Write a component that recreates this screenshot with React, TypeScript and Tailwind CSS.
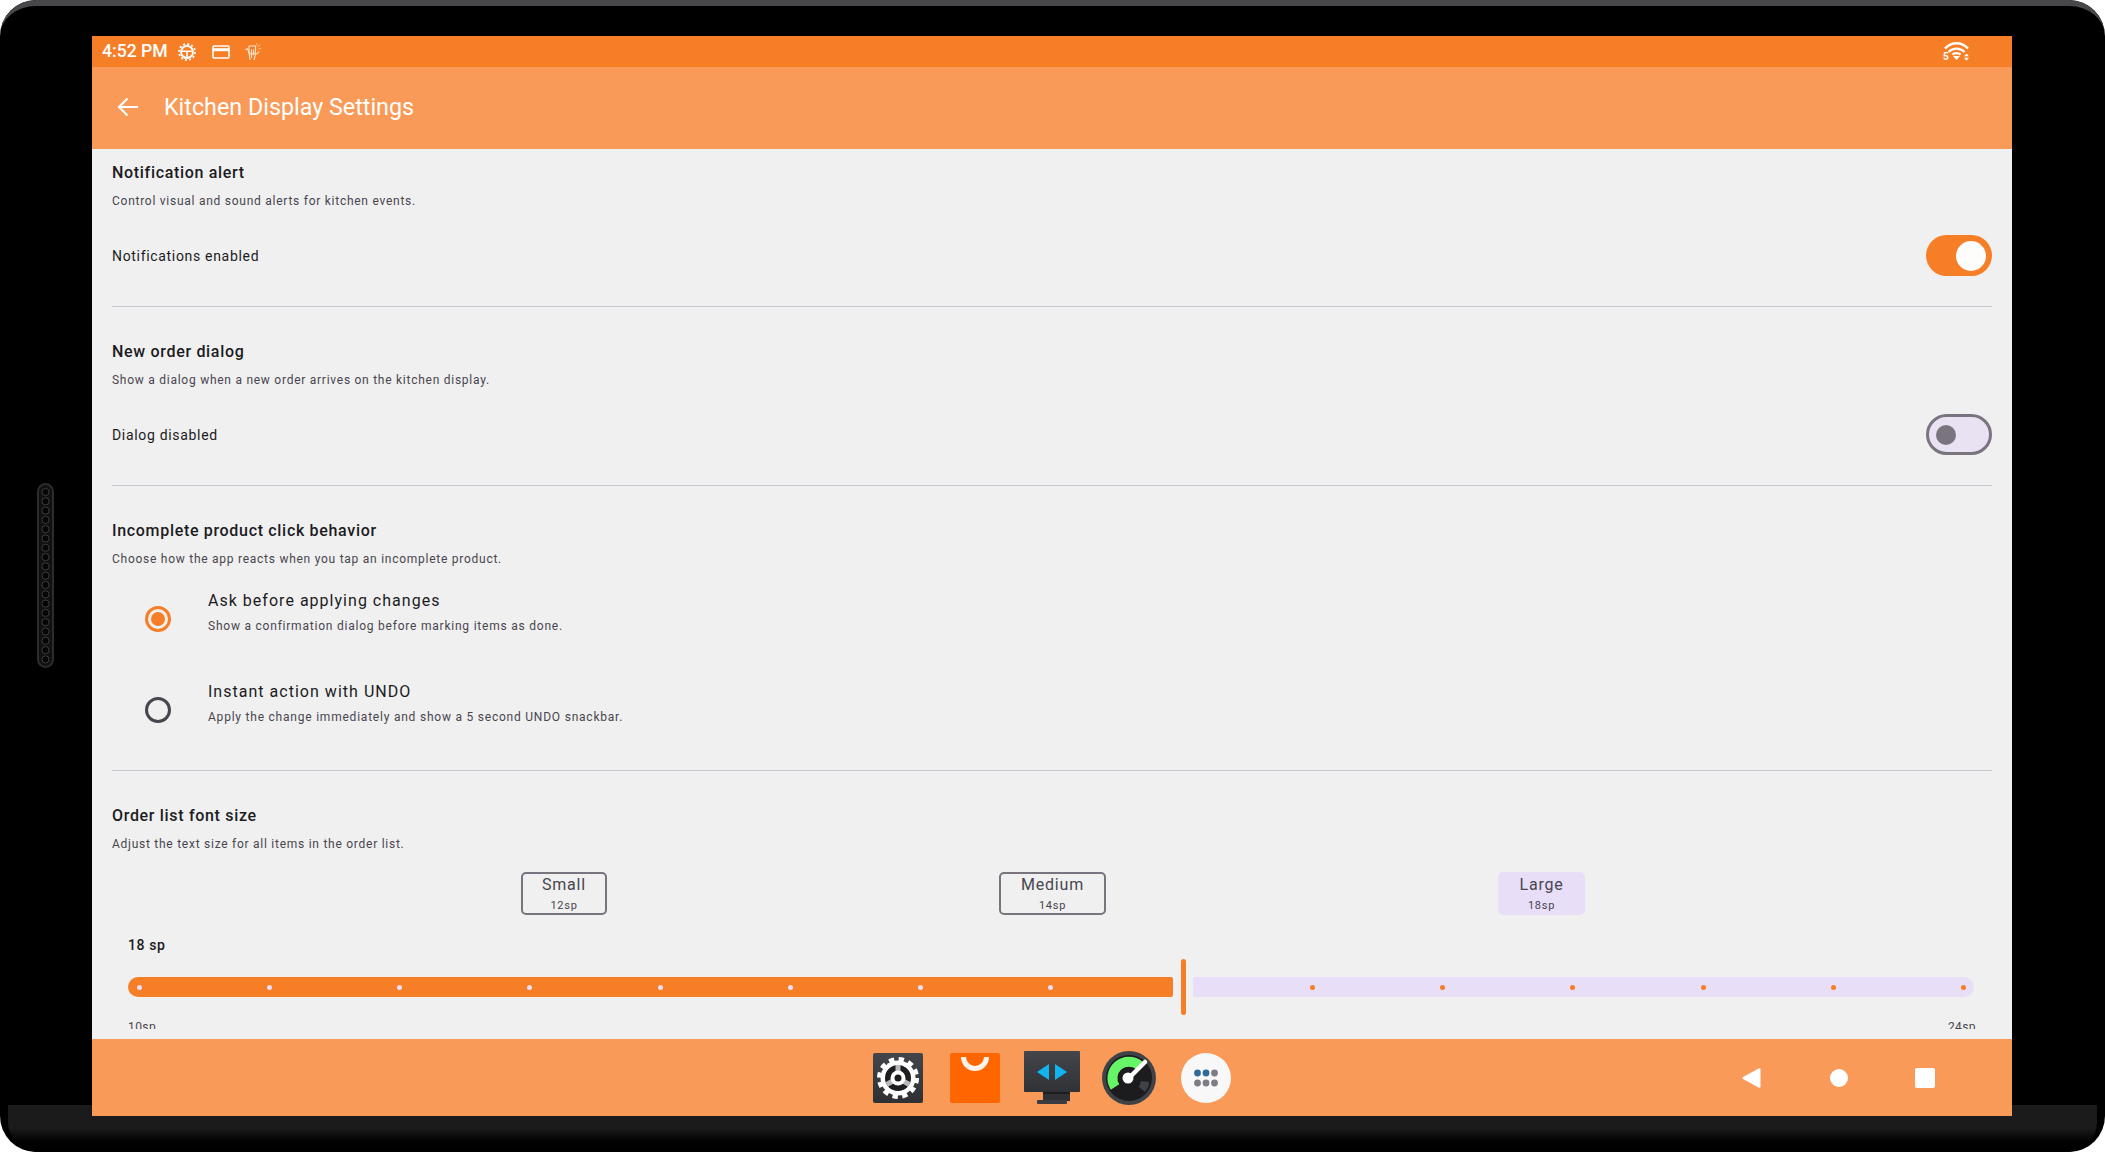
import React from "react";

const Dots = ({ n, color }: { n: number; color: string }) => (
  <>
    {Array.from({ length: n }).map((_, i) => (
      <span key={i} className={`w-[5px] h-[5px] rounded-full ${color}`} />
    ))}
  </>
);

const SectionHead = ({ title, sub }: { title: string; sub: string }) => (
  <>
    <div className="text-[16px] leading-[24px] font-medium tracking-[0.68px] text-[#1c1b1f]">{title}</div>
    <div className="mt-[8px] text-[12px] leading-[16px] tracking-[0.74px] text-[#49454f]">{sub}</div>
  </>
);

const Divider = () => <div className="h-[1px] bg-[#cac4d0]" />;

const ToggleRow = ({ label, on }: { label: string; on: boolean }) => (
  <div className="mt-[26px] flex h-[41px] items-center justify-between">
    <span className="pt-[1px] text-[14px] tracking-[0.68px] text-[#1c1b1f]">{label}</span>
    {on ? (
      <div className="flex h-[41px] w-[66px] items-center justify-end rounded-full bg-[#f67e26] pr-[6px]">
        <div className="h-[30px] w-[30px] rounded-full bg-[#fdfdfd]" />
      </div>
    ) : (
      <div className="flex h-[41px] w-[66px] items-center rounded-full border-[3px] border-[#79747e] bg-[#e8e2f3] pl-[7px]">
        <div className="h-[20px] w-[20px] rounded-full bg-[#79747e]" />
      </div>
    )}
  </div>
);

const RadioRow = ({ title, sub, on }: { title: string; sub: string; on: boolean }) => (
  <div className="flex h-[91px] items-center pl-[33px]">
    {on ? (
      <div className="flex h-[26px] w-[26px] items-center justify-center rounded-full border-[3px] border-[#f67e26]">
        <div className="h-[14px] w-[14px] rounded-full bg-[#f67e26]" />
      </div>
    ) : (
      <div className="h-[26px] w-[26px] rounded-full border-[3px] border-[#49454f]" />
    )}
    <div className="ml-[37px] self-start pt-[16px]">
      <div className="text-[16px] leading-[24px] tracking-[1.02px] text-[#1c1b1f]">{title}</div>
      <div className="mt-[5px] text-[12px] leading-[16px] tracking-[0.78px] text-[#49454f]">{sub}</div>
    </div>
  </div>
);

const Chip = ({ label, sp, w, filled }: { label: string; sp: string; w: string; filled?: boolean }) => (
  <div
    className={`flex h-[43px] flex-col items-center rounded-[5px] ${w} ${
      filled ? "bg-[#e8def8]" : "border-2 border-[#79747e]"
    }`}
  >
    <span className={`text-[16px] leading-[20px] tracking-[0.8px] text-[#49454f] ${filled ? "mt-[3px]" : "mt-[1px]"}`}>{label}</span>
    <span className="mt-[4px] text-[11px] leading-[14px] tracking-[0.7px] text-[#49454f]">{sp}</span>
  </div>
);

const StatusGear = () => (
  <svg width="18" height="18" viewBox="0 0 18 18" fill="none" stroke="#fff">
    <circle cx="9" cy="9" r="8" strokeWidth="1.8" strokeDasharray="2 2.19" />
    <circle cx="9" cy="9" r="6" strokeWidth="1.8" />
    <path d="M3.5 8.2H14.5M9 8.2V14" strokeWidth="1.6" />
  </svg>
);

const StatusCard = () => (
  <svg width="18" height="14" viewBox="0 0 18 14" fill="none">
    <rect x="1" y="1" width="16" height="12" rx="1" stroke="#fff" strokeWidth="1.6" />
    <rect x="1" y="3.2" width="16" height="3" fill="#fff" />
  </svg>
);

const StatusFigure = () => (
  <svg width="18" height="18" viewBox="0 0 18 18" fill="none" stroke="#fde3cc" strokeWidth="1.1">
    <path d="M1 6.5L3.5 6 5 10 6 17M15 8.5C14 10.5 12.5 11 11.5 11L10 17" />
    <path d="M5 3H11.5V9C11.5 10.5 9.5 11 8 11 6.5 11 5 10 5 8.5Z" />
    <path d="M7.5 6.5V15M9.5 6.5V12" />
    <path d="M13.5 3.5L16.5 1.5M14.5 6L17 5.5M12.5 1.5L13 .5" strokeDasharray="1 1" />
  </svg>
);

const StatusWifi = () => (
  <div className="relative h-[20px] w-[27px]">
    <svg width="27" height="20" viewBox="0 0 27 20" fill="none" stroke="#fff" strokeWidth="2.4">
      <path d="M2 6.5C8.5 -0.5 18.5 -0.5 25 6.5" />
      <path d="M5.5 10C10 5.5 17 5.5 21.5 10" />
      <path d="M9.5 12.6C11.5 10.6 15.5 10.6 17.5 12.6" />
      <path d="M10 14H17L13.5 18Z" fill="#fff" stroke="none" />
      <path d="M21 14.2H26L23.5 11.5ZM21 15.8H26L23.5 18.8Z" fill="#fff" stroke="none" />
    </svg>
    <span className="absolute bottom-[-1px] left-0 text-[10px] font-bold leading-[12px] text-white">5</span>
  </div>
);

const SettingsApp = () => (
  <svg width="50" height="50" viewBox="0 0 50 50">
    <defs>
      <linearGradient id="sg" x1="0" y1="0" x2="0" y2="1">
        <stop offset="0" stopColor="#43454b" />
        <stop offset="1" stopColor="#2e3034" />
      </linearGradient>
    </defs>
    <rect width="50" height="50" rx="2" fill="url(#sg)" />
    <circle cx="25" cy="25" r="18.5" fill="none" stroke="#fff" strokeWidth="5" strokeDasharray="5.2 4.5" />
    <circle cx="25" cy="25" r="17.5" fill="#fff" />
    <circle cx="25" cy="25" r="13" fill="#1d1d1f" />
    <path d="M25 12V18M13.7 31.5L19 28.5M36.3 31.5L31 28.5" stroke="#b9b9bd" strokeWidth="5" />
    <circle cx="25" cy="25" r="7.5" fill="#fff" />
    <circle cx="25" cy="25" r="3.5" fill="#1d1d1f" />
  </svg>
);

const BagApp = () => (
  <svg width="50" height="50" viewBox="0 0 50 50">
    <rect width="50" height="50" rx="2" fill="#ff6600" />
    <path d="M13.5 4A11.5 11.5 0 0 0 36.5 4" fill="none" stroke="#fdf3ea" strokeWidth="5" />
  </svg>
);

const MonitorApp = () => (
  <svg width="56" height="53" viewBox="0 0 56 53">
    <defs>
      <linearGradient id="mg" x1="0" y1="0" x2="0" y2="1">
        <stop offset="0" stopColor="#43454b" />
        <stop offset="1" stopColor="#303236" />
      </linearGradient>
    </defs>
    <rect width="56" height="41" rx="1" fill="url(#mg)" />
    <rect x="19" y="41" width="27" height="9" fill="#2f3135" />
    <rect x="19" y="41" width="27" height="2" fill="#1d1d1f" />
    <rect x="13" y="49" width="30" height="4" rx="1" fill="#3a3c41" />
    <path d="M25 13V29L13 21ZM31 13V29L43 21Z" fill="#12b4f0" />
  </svg>
);

const GaugeApp = () => (
  <svg width="54" height="54" viewBox="0 0 54 54">
    <circle cx="27" cy="27" r="27" fill="#3f4247" />
    <circle cx="27" cy="27" r="23" fill="#1c1c1e" />
    <path d="M37 36L43 41C46 37 47 34 47 31L39 30Z" fill="#3f4247" />
    <path d="M13 36A16.5 16.5 0 0 1 37.5 14.5" fill="none" stroke="#66f566" strokeWidth="10" />
    <circle cx="27" cy="27" r="11" fill="#1c1c1e" />
    <path d="M27 27L43 11" stroke="#fff" strokeWidth="4.5" strokeLinecap="round" />
    <circle cx="26" cy="27" r="5.5" fill="#fff" />
  </svg>
);

const AppsApp = () => (
  <svg width="50" height="50" viewBox="0 0 50 50">
    <circle cx="25" cy="25" r="25" fill="#f8f8f8" />
    <circle cx="16.5" cy="20" r="3.4" fill="#2f6a9b" />
    <circle cx="25" cy="20" r="3.4" fill="#2f6a9b" />
    <circle cx="33.5" cy="20" r="3.4" fill="#7e7c85" />
    <circle cx="16.5" cy="30" r="3.4" fill="#7e7c85" />
    <circle cx="25" cy="30" r="3.4" fill="#7e7c85" />
    <circle cx="33.5" cy="30" r="3.4" fill="#7e7c85" />
  </svg>
);

const Grill = () => (
  <svg width="17" height="185" viewBox="0 0 17 185" fill="none">
    <rect x="1" y="1" width="15" height="183" rx="7.5" fill="#111" stroke="#2c2c2e" strokeWidth="2" />
    {Array.from({ length: 19 }).map((_, i) => (
      <circle key={i} cx="8.5" cy={9 + i * 9.3} r="3.6" fill="#050505" stroke="#3c3c3e" strokeWidth="1" />
    ))}
  </svg>
);

export default function App() {
  return (
    <div className="relative h-[1152px] w-[2105px] overflow-hidden bg-white font-['Roboto',sans-serif]">
      <div className="relative h-full w-full overflow-hidden rounded-[36px] bg-black pl-[92px] pt-[36px]">
        {/* device frame details */}
        <div className="absolute inset-0 rounded-[36px] border-t-[6px] border-[#48484b]" />
        <div className="absolute bottom-0 left-[8px] right-[8px] top-[1105px] rounded-b-[30px] bg-gradient-to-b from-[#1b1b1b] via-[#1b1b1b] to-black" />
        <div className="absolute left-[37px] top-[483px]">
          <Grill />
        </div>

        {/* screen */}
        <div className="relative flex h-[1080px] w-[1920px] flex-col bg-[#f0f0f0]">
          <div className="flex h-[31px] shrink-0 items-center bg-[#f67e26] pl-[10px] pr-[42px] text-white">
            <span className="text-[17.6px] font-medium leading-[31px]">4:52 PM</span>
            <span className="ml-[10px]"><StatusGear /></span>
            <span className="ml-[16px]"><StatusCard /></span>
            <span className="ml-[14px]"><StatusFigure /></span>
            <span className="ml-auto"><StatusWifi /></span>
          </div>

          <div className="flex h-[82px] shrink-0 items-center bg-[#f99a58] pb-[2px] pl-[24px] text-white">
            <svg width="24" height="24" viewBox="0 0 24 24" fill="none" stroke="#fff" strokeWidth="2.2">
              <path d="M22 12H3M11.5 3.5L3 12l8.5 8.5" />
            </svg>
            <span className="ml-[24px] text-[23.3px] leading-[32px] text-white">Kitchen Display Settings</span>
          </div>

          <div className="mb-[10px] min-h-0 flex-1 overflow-hidden px-[20px]">
            <div className="pb-[30px] pt-[12px]">
              <SectionHead title="Notification alert" sub="Control visual and sound alerts for kitchen events." />
              <ToggleRow label="Notifications enabled" on />
            </div>
            <Divider />
            <div className="pb-[30px] pt-[33px]">
              <SectionHead title="New order dialog" sub="Show a dialog when a new order arrives on the kitchen display." />
              <ToggleRow label="Dialog disabled" on={false} />
            </div>
            <Divider />
            <div className="pb-[15px] pt-[33px]">
              <SectionHead title="Incomplete product click behavior" sub="Choose how the app reacts when you tap an incomplete product." />
              <div className="mt-[6px]">
                <RadioRow title="Ask before applying changes" sub="Show a confirmation dialog before marking items as done." on />
                <RadioRow title="Instant action with UNDO" sub="Apply the change immediately and show a 5 second UNDO snackbar." on={false} />
              </div>
            </div>
            <Divider />
            <div className="pt-[33px]">
              <SectionHead title="Order list font size" sub="Adjust the text size for all items in the order list." />
              <div className="mt-[20px] flex justify-evenly pl-[17px] pr-[15px]">
                <Chip label="Small" sp="12sp" w="w-[86px]" />
                <Chip label="Medium" sp="14sp" w="w-[107px]" />
                <Chip label="Large" sp="18sp" w="w-[87px]" filled />
              </div>
              <div className="ml-[16px] mt-[20px] text-[14px] font-medium leading-[20px] tracking-[0.6px] text-[#1c1b1f]">18 sp</div>
              <div className="ml-[16px] mt-[4px] flex h-[56px] items-center">
                <div className="flex h-[20px] w-[1045px] items-center justify-between rounded-l-[10px] rounded-r-[2px] bg-[#f67e26] pl-[8.5px] pr-[119.5px]">
                  <Dots n={8} color="bg-[#e8def8]" />
                </div>
                <div className="ml-[8px] h-[56px] w-[5px] rounded-full bg-[#f67e26]" />
                <div className="ml-[7px] flex h-[20px] w-[781px] items-center justify-between rounded-l-[2px] rounded-r-[10px] bg-[#e8def8] pl-[116.5px] pr-[7.5px]">
                  <Dots n={6} color="bg-[#f67e26]" />
                </div>
              </div>
              <div className="mx-[16px] mt-[4px] flex justify-between text-[12px] leading-[16px] tracking-[0.4px] text-[#49454f]">
                <span>10sp</span>
                <span>24sp</span>
              </div>
            </div>
          </div>

          <div className="flex h-[77px] shrink-0 items-center bg-[#f99a58]">
            <span className="ml-[781px] flex"><SettingsApp /></span>
            <span className="ml-[27px] flex"><BagApp /></span>
            <span className="ml-[24px] flex"><MonitorApp /></span>
            <span className="ml-[22px] flex"><GaugeApp /></span>
            <span className="ml-[25px] flex"><AppsApp /></span>
            <svg className="ml-[511px]" width="19" height="20" viewBox="0 0 19 20">
              <path d="M17.5 1.2V18.8L1.5 10Z" fill="#fff" stroke="#fff" strokeWidth="2" strokeLinejoin="round" />
            </svg>
            <div className="ml-[69px] h-[18px] w-[18px] rounded-full bg-white" />
            <div className="ml-[67px] h-[20px] w-[20px] rounded-[2px] bg-white" />
          </div>
        </div>
      </div>
    </div>
  );
}
